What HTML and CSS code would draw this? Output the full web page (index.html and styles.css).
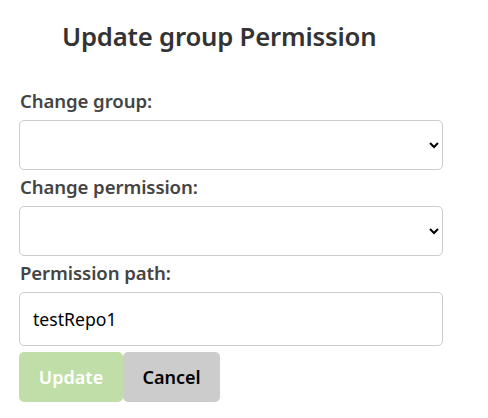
FILE: index.html
```html
<!DOCTYPE html>
<html>
<head>
<meta charset="utf-8">
<link rel="stylesheet" href="styles.css">
</head>
<body>
<div class="dialog">
  <h2 class="title">Update group Permission</h2>
  <form class="form">
    <label class="label">Change group:</label>
    <select class="field select"><option></option></select>
    <label class="label">Change permission:</label>
    <select class="field select"><option></option></select>
    <label class="label">Permission path:</label>
    <input class="field input" type="text" value="testRepo1">
    <div class="actions">
      <button type="button" class="btn btn-update" disabled>Update</button>
      <button type="button" class="btn btn-cancel">Cancel</button>
    </div>
  </form>
</div>
</body>
</html>
```

FILE: styles.css
```css
* { box-sizing: border-box; }
body {
  margin: 0;
  background: #fff;
  font-family: "Noto Sans", "Open Sans", sans-serif;
  color: #333;
}
.dialog {
  padding: 19px 45px 0 19px;
}
.title {
  margin: 0 0 0 43px;
  font-size: 25.7px;
  font-weight: 600;
  line-height: 36px;
  color: #333;
  letter-spacing: -0.2px;
}
.form {
  display: flex;
  flex-direction: column;
  margin-top: 34px;
}
.label {
  font-size: 18.6px;
  font-weight: 600;
  color: #444;
  line-height: 24px;
  margin: 0 0 0 1px;
  letter-spacing: -0.1px;
}
.field {
  width: 424px;
  border: 1px solid #ccc;
  border-radius: 5px;
  background: #fff;
  font-family: inherit;
  font-size: 17.6px;
  color: #000;
}
.select {
  height: 50px;
  margin: 7px 0 5px;
  padding: 0 10px;
}
.input {
  height: 54px;
  margin: 7px 0 6px;
  padding: 0 13px;
}
.actions {
  display: flex;
}
.btn {
  height: 50px;
  border: none;
  border-radius: 5px;
  font-family: inherit;
  font-size: 18px;
  font-weight: 600;
  padding: 0;
}
.btn-update {
  width: 104px;
  background: #c0dfa8;
  color: #fff;
}
.btn-cancel {
  width: 97px;
  background: #ccc;
  color: #000;
}
```
